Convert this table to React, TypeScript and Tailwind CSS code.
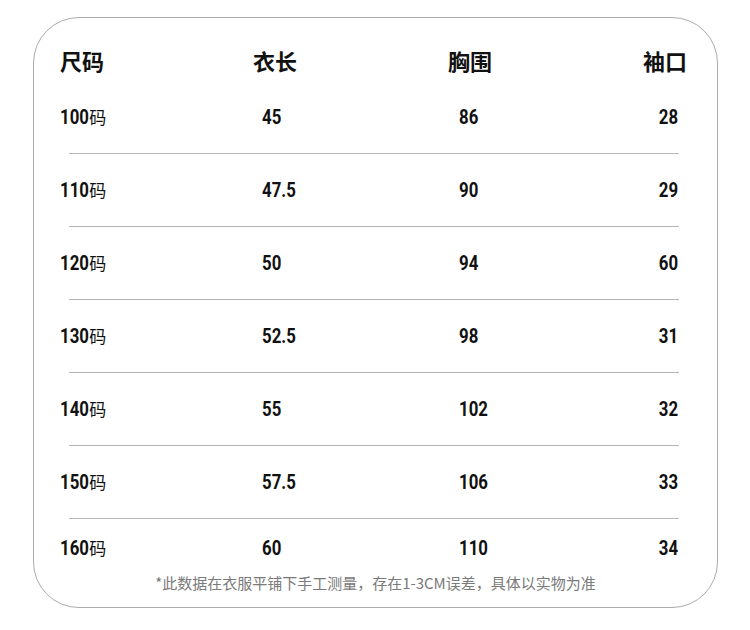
const rows = [
  { size: '100', length: '45', chest: '86', cuff: '28' },
  { size: '110', length: '47.5', chest: '90', cuff: '29' },
  { size: '120', length: '50', chest: '94', cuff: '60' },
  { size: '130', length: '52.5', chest: '98', cuff: '31' },
  { size: '140', length: '55', chest: '102', cuff: '32' },
  { size: '150', length: '57.5', chest: '106', cuff: '33' },
  { size: '160', length: '60', chest: '110', cuff: '34' },
]

const cjk = "font-['Noto_Sans_CJK_SC',sans-serif]"
// condensed-looking bold digits: Roboto squeezed horizontally
const num = "inline-block font-['Roboto',sans-serif] font-bold text-[21px] leading-none scale-x-[0.8]"

export default function App() {
  return (
    <div className="min-h-[630px] w-[750px] bg-white pt-[17px] pl-[33px]">
      <div className="flex h-[591px] w-[685px] flex-col rounded-[46px] border border-[#ababab] text-[#111]">
        {/* Header */}
        <div className={`flex h-[63px] items-end pb-[8px] pl-[26px] pr-[30px] text-[22px] font-bold leading-[26px] ${cjk}`}>
          <div className="w-[193px]">尺码</div>
          <div className="w-[195px]">衣长</div>
          <div className="flex-1">胸围</div>
          <div>袖口</div>
        </div>

        {/* Rows */}
        {rows.map((row, i) => (
          <div key={row.size}>
            {i > 0 && <div className="ml-[35px] mr-[38px] h-px bg-[#b5b5b5]" />}
            <div className={`flex items-center pl-[26px] pr-[39px] ${i === rows.length - 1 ? 'h-[58px]' : 'h-[72px]'}`}>
              <div className="flex w-[193px] items-baseline">
                <span className={`origin-left ${num}`}>{row.size}</span>
                <span className={`-ml-[7px] text-[17px] leading-none ${cjk}`}>码</span>
              </div>
              <div className="w-[195px] pl-[9px] pt-[2px]">
                <span className={`origin-left ${num}`}>{row.length}</span>
              </div>
              <div className="flex-1 pl-[11px] pt-[2px]">
                <span className={`origin-left ${num}`}>{row.chest}</span>
              </div>
              <div className="pt-[2px]">
                <span className={`origin-right ${num}`}>{row.cuff}</span>
              </div>
            </div>
          </div>
        ))}

        {/* Note */}
        <p className={`-mt-[4px] text-center text-[15px] leading-[20px] text-[#7a7a7a] ${cjk}`}>
          *此数据在衣服平铺下手工测量，存在1-3CM误差，具体以实物为准
        </p>
      </div>
    </div>
  )
}
